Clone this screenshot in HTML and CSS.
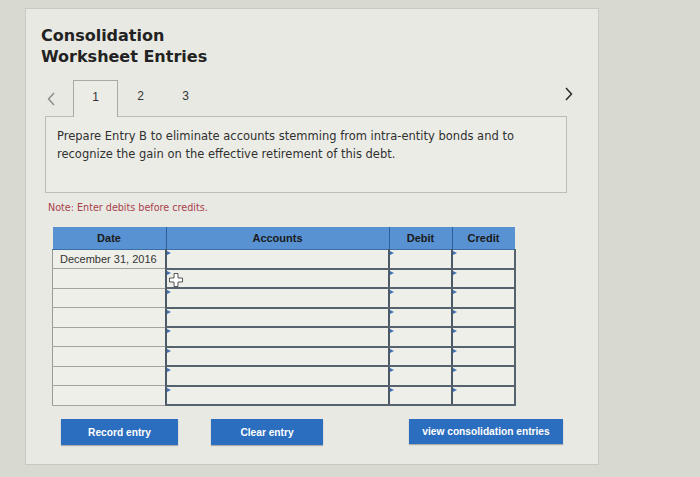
FILE: index.html
```html
<!DOCTYPE html>
<html lang="en">
<head>
<meta charset="utf-8">
<title>Consolidation Worksheet Entries</title>
<link rel="stylesheet" href="styles.css">
</head>
<body>
<div class="panel">
  <h1 class="title">Consolidation<br>Worksheet Entries</h1>
  <div class="tabs">
    <span class="nav prev"><svg width="8" height="14" viewBox="0 0 8 14"><path d="M7 1 L1.5 7 L7 13" fill="none" stroke="#8a8a8a" stroke-width="1.4"/></svg></span>
    <span class="tab active">1</span>
    <span class="tab">2</span>
    <span class="tab">3</span>
    <span class="spacer"></span>
    <span class="nav next"><svg width="8" height="14" viewBox="0 0 8 14"><path d="M1 1 L6.5 7 L1 13" fill="none" stroke="#2a2a2a" stroke-width="1.5"/></svg></span>
  </div>
  <div class="question">
    <p>Prepare Entry B to eliminate accounts stemming from intra-entity bonds and to recognize the gain on the effective retirement of this debt.</p>
  </div>
  <p class="note">Note: Enter debits before credits.</p>
  <table class="entries">
    <thead>
      <tr><th class="c-date">Date</th><th class="c-acct">Accounts</th><th class="c-num">Debit</th><th class="c-num c-last">Credit</th></tr>
    </thead>
    <tbody>
      <tr><td class="date">December 31, 2016</td><td class="in"></td><td class="in"></td><td class="in"></td></tr>
      <tr><td class="date"></td><td class="in"><svg class="cursor" width="14" height="14" viewBox="0 0 14 14"><path d="M5 0.5 H9 V5 H13.5 V9 H9 V13.5 H5 V9 H0.5 V5 H5 Z" fill="#fff" stroke="#555" stroke-width="1"/></svg></td><td class="in"></td><td class="in"></td></tr>
      <tr><td class="date"></td><td class="in"></td><td class="in"></td><td class="in"></td></tr>
      <tr><td class="date"></td><td class="in"></td><td class="in"></td><td class="in"></td></tr>
      <tr><td class="date"></td><td class="in"></td><td class="in"></td><td class="in"></td></tr>
      <tr><td class="date"></td><td class="in"></td><td class="in"></td><td class="in"></td></tr>
      <tr><td class="date"></td><td class="in"></td><td class="in"></td><td class="in"></td></tr>
      <tr><td class="date"></td><td class="in"></td><td class="in"></td><td class="in"></td></tr>
    </tbody>
  </table>
  <div class="actions">
    <button class="btn btn-record">Record entry</button>
    <button class="btn btn-clear">Clear entry</button>
    <button class="btn btn-view">view consolidation entries</button>
  </div>
</div>
</body>
</html>
```
FILE: styles.css
```css
html, body {
  margin: 0;
  padding: 0;
}
body {
  background: #d8d9d0;
  font-family: "DejaVu Sans", Verdana, sans-serif;
  color: #2a2a2a;
  padding-top: 8px;
  padding-left: 25px;
}
.panel {
  box-sizing: border-box;
  width: 574px;
  height: 457px;
  background: #e9e9e3;
  border: 1px solid #c9c9c1;
  padding-top: 16px;
}
.title {
  margin: 0 0 13px 15px;
  font-family: "DejaVu Sans", Verdana, sans-serif;
  font-weight: bold;
  font-size: 16px;
  line-height: 21px;
  color: #222;
}
.tabs {
  display: flex;
  align-items: stretch;
  height: 36px;
  margin-left: 19px;
  width: 532px;
  font-family: "Liberation Sans", Arial, sans-serif;
  font-size: 12px;
  color: #333;
}
.nav {
  display: flex;
  align-items: center;
}
.prev {
  width: 28px;
  padding-left: 2px;
  box-sizing: border-box;
  padding-top: 2px;
}
.next {
  width: 12px;
  padding-bottom: 8px;
}
.tab {
  width: 45px;
  box-sizing: border-box;
  display: flex;
  align-items: center;
  justify-content: center;
  padding-bottom: 4px;
}
.tab.active {
  border: 1px solid #a9a9a2;
  border-bottom: none;
  background: #ecece7;
  margin-bottom: -1px;
  position: relative;
  z-index: 1;
}
.spacer {
  flex: 1;
}
.question {
  box-sizing: border-box;
  margin-left: 19px;
  width: 522px;
  height: 77px;
  background: #ecece7;
  border: 1px solid #bdbdb6;
  padding: 10px 11px;
}
.question p {
  margin: 0;
  font-size: 11.5px;
  line-height: 18px;
  color: #303030;
}
.note {
  margin: 9px 0 0 22px;
  font-size: 9.6px;
  line-height: 12px;
  color: #a8404c;
}
.entries {
  margin: 13px 0 0 26px;
  border-collapse: collapse;
  table-layout: fixed;
  width: 462px;
  font-family: "Liberation Sans", Arial, sans-serif;
}
.entries th {
  height: 22px;
  padding: 0;
  background: #5892d3;
  border-right: 1px solid #2e5f99;
  border-bottom: 1px solid #3c6ea8;
  font-size: 11px;
  font-weight: bold;
  color: #1a1a1a;
  text-align: center;
}
.entries th.c-last {
  border-right: none;
}
.c-date { width: 113px; }
.c-acct { width: 222px; }
.c-num { width: 62px; }
.entries td {
  height: 17.5px;
  padding: 0;
  background: #efefea;
  position: relative;
}
.entries td.date {
  border-left: 1px solid #9a9a96;
  border-bottom: 1px solid #a3a3a0;
  font-size: 11px;
  color: #333;
  padding-left: 7px;
  white-space: nowrap;
}
.entries td.in {
  border-left: 2px solid #4c5a68;
  border-bottom: 2px solid #56636f;
}
.entries td.in:last-child {
  border-right: 2px solid #56636f;
}
.entries td.in::before {
  content: "";
  position: absolute;
  left: 0;
  top: 1px;
  border-left: 4px solid #3e72b4;
  border-top: 2px solid transparent;
  border-bottom: 2px solid transparent;
}
.cursor {
  position: absolute;
  left: 2px;
  top: 3px;
}
.actions {
  display: flex;
  align-items: flex-start;
  margin-top: 13px;
  margin-left: 35px;
}
.btn {
  height: 26px;
  border: none;
  padding: 0;
  background: #2b6dbe;
  color: #fff;
  font-family: "Liberation Sans", Arial, sans-serif;
  font-size: 10.2px;
  font-weight: bold;
  box-shadow: 0 1px 1px rgba(0,0,0,0.25);
}
.btn-record { width: 117px; }
.btn-clear { width: 112px; margin-left: 33px; }
.btn-view { width: 154px; margin-left: 86px; height: 25px; }
```
